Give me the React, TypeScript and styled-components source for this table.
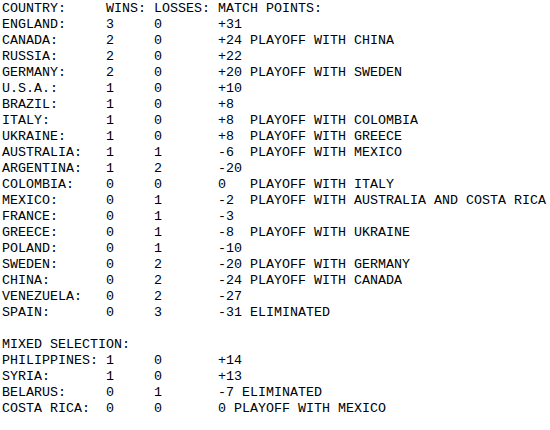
import styled, { createGlobalStyle } from 'styled-components';

type Team = {
	name: string;
	wins: number;
	losses: number;
	points: string;
};

const GlobalStyle = createGlobalStyle`
	html, body {
		margin: 0;
		padding: 0;
		background: #fff;
	}
`;

const Page = styled.div`
	padding: 1px 0 0 2px;
	font-family: "Liberation Mono", "Courier New", monospace;
	font-size: 13.333px;
	line-height: 16px;
	color: #000;
	white-space: pre;
`;

const Row = styled.div`
	display: grid;
	grid-template-columns: 104px 48px 64px auto;
	height: 16px;
`;

const Spacer = styled.div`
	height: 16px;
`;

const Heading = styled.div`
	height: 16px;
`;

// match points keep the spacing of the original printout
const teams: Team[] = [
	{ name: 'ENGLAND:', wins: 3, losses: 0, points: '+31' },
	{ name: 'CANADA:', wins: 2, losses: 0, points: '+24 PLAYOFF WITH CHINA' },
	{ name: 'RUSSIA:', wins: 2, losses: 0, points: '+22' },
	{ name: 'GERMANY:', wins: 2, losses: 0, points: '+20 PLAYOFF WITH SWEDEN' },
	{ name: 'U.S.A.:', wins: 1, losses: 0, points: '+10' },
	{ name: 'BRAZIL:', wins: 1, losses: 0, points: '+8' },
	{ name: 'ITALY:', wins: 1, losses: 0, points: '+8  PLAYOFF WITH COLOMBIA' },
	{ name: 'UKRAINE:', wins: 1, losses: 0, points: '+8  PLAYOFF WITH GREECE' },
	{ name: 'AUSTRALIA:', wins: 1, losses: 1, points: '-6  PLAYOFF WITH MEXICO' },
	{ name: 'ARGENTINA:', wins: 1, losses: 2, points: '-20' },
	{ name: 'COLOMBIA:', wins: 0, losses: 0, points: '0   PLAYOFF WITH ITALY' },
	{ name: 'MEXICO:', wins: 0, losses: 1, points: '-2  PLAYOFF WITH AUSTRALIA AND COSTA RICA' },
	{ name: 'FRANCE:', wins: 0, losses: 1, points: '-3' },
	{ name: 'GREECE:', wins: 0, losses: 1, points: '-8  PLAYOFF WITH UKRAINE' },
	{ name: 'POLAND:', wins: 0, losses: 1, points: '-10' },
	{ name: 'SWEDEN:', wins: 0, losses: 2, points: '-20 PLAYOFF WITH GERMANY' },
	{ name: 'CHINA:', wins: 0, losses: 2, points: '-24 PLAYOFF WITH CANADA' },
	{ name: 'VENEZUELA:', wins: 0, losses: 2, points: '-27' },
	{ name: 'SPAIN:', wins: 0, losses: 3, points: '-31 ELIMINATED' },
];

const mixed: Team[] = [
	{ name: 'PHILIPPINES:', wins: 1, losses: 0, points: '+14' },
	{ name: 'SYRIA:', wins: 1, losses: 0, points: '+13' },
	{ name: 'BELARUS:', wins: 0, losses: 1, points: '-7 ELIMINATED' },
	{ name: 'COSTA RICA:', wins: 0, losses: 0, points: '0 PLAYOFF WITH MEXICO' },
];

const TeamRow = ({ team }: { team: Team }) => (
	<Row>
		<span>{team.name}</span>
		<span>{team.wins}</span>
		<span>{team.losses}</span>
		<span>{team.points}</span>
	</Row>
);

const App = () => {
	return (
		<>
			<GlobalStyle />
			<Page>
				<Row>
					<span>COUNTRY:</span>
					<span>WINS:</span>
					<span>LOSSES:</span>
					<span>MATCH POINTS:</span>
				</Row>
				{teams.map((team) => (
					<TeamRow key={team.name} team={team} />
				))}
				<Spacer />
				<Heading>MIXED SELECTION:</Heading>
				{mixed.map((team) => (
					<TeamRow key={team.name} team={team} />
				))}
			</Page>
		</>
	);
};

export default App;
